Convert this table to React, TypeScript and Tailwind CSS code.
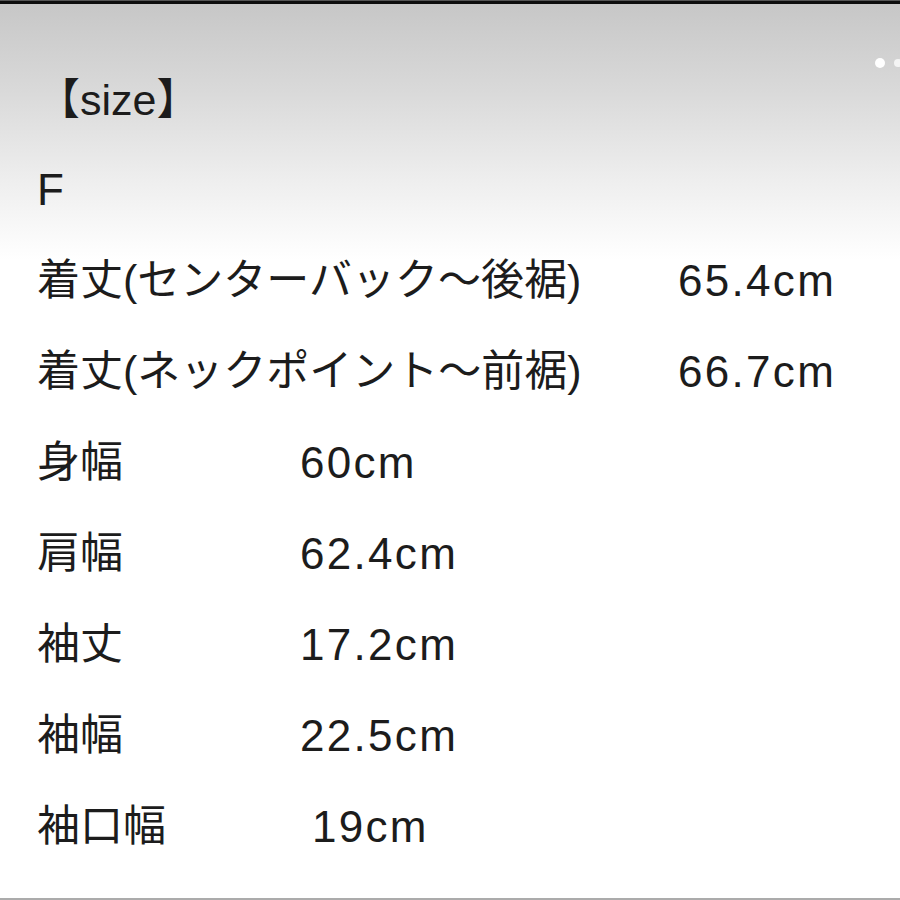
const font = { fontFamily: '"Liberation Sans", "Noto Sans CJK JP", sans-serif' };

const wide = [
  { label: '着丈(センターバック～後裾)', value: '65.4cm' },
  { label: '着丈(ネックポイント～前裾)', value: '66.7cm' },
];

const narrow = [
  { label: '身幅', value: '60cm' },
  { label: '肩幅', value: '62.4cm' },
  { label: '袖丈', value: '17.2cm' },
  { label: '袖幅', value: '22.5cm' },
  { label: '袖口幅', value: '19cm', pad: true },
];

export default function App() {
  return (
    <div
      className="relative w-[900px] h-[900px] overflow-hidden flex flex-col bg-[linear-gradient(to_bottom,#c6c6c6_0px,#d9d9d9_90px,#eeeeee_180px,#ffffff_260px)] text-[#1c1c1c]"
      style={font}
    >
      <div className="h-[1px] bg-[#555]" />
      <div className="h-[3px] bg-[#0d0d0d]" />

      {/* page dots */}
      <div className="absolute top-[58px] left-[875px] w-[10px] h-[10px] rounded-full bg-white" />
      <div className="absolute top-[59px] left-[894px] w-[8px] h-[8px] rounded-full bg-[#f4f4f4]" />

      <div className="flex-1 flex flex-col pt-[53px] pl-[37px]">
        <div className="h-[87px] leading-[87px] text-[43px]">【size】</div>
        <div className="h-[91px] leading-[91px] text-[44px]">F</div>

        {wide.map(r => (
          <div key={r.label} className="h-[91px] flex items-center">
            <div className="w-[641px] leading-[91px] text-[43px]">{r.label}</div>
            <div className="leading-[91px] text-[44px] tracking-[2.3px]">{r.value}</div>
          </div>
        ))}

        {narrow.map(r => (
          <div key={r.label} className="h-[91px] flex items-center">
            <div className="w-[263px] leading-[91px] text-[43px]">{r.label}</div>
            <div className={`leading-[91px] text-[44px] tracking-[2.3px] ${r.pad ? 'pl-[12px]' : ''}`}>{r.value}</div>
          </div>
        ))}
      </div>

      <div className="h-[2px] bg-[#ababab]" />
    </div>
  );
}
